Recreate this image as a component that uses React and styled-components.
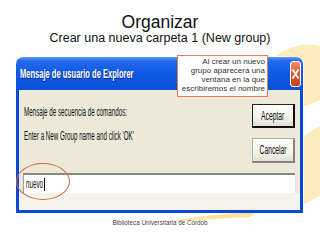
import styled, { createGlobalStyle } from 'styled-components';

const GlobalStyle = createGlobalStyle`
  html, body {
    margin: 0;
    padding: 0;
    background: #ffffff;
  }
  body {
    font-family: "Liberation Sans", Arial, sans-serif;
  }
`;

const Page = styled.div`
  position: relative;
  width: 320px;
  height: 240px;
  overflow: hidden;
  background: #ffffff;
`;

const Watermark = styled.svg`
  position: absolute;
  left: 0;
  top: 0;
  z-index: 0;
`;

const Content = styled.div`
  position: relative;
  z-index: 1;
  display: flex;
  flex-direction: column;
  padding-top: 13px;
`;

const Title = styled.h1`
  margin: 0;
  font-size: 17.5px;
  line-height: 18px;
  font-weight: normal;
  text-align: center;
  color: #111;
`;

const Subtitle = styled.h2`
  margin: 0;
  font-size: 12.5px;
  line-height: 14px;
  font-weight: normal;
  text-align: center;
  color: #111;
`;

const Dialog = styled.div`
  margin: 12px 0 0 16px;
  width: 287px;
  height: 156px;
  display: flex;
  flex-direction: column;
`;

const TitleBar = styled.div`
  height: 33px;
  flex: none;
  display: flex;
  align-items: center;
  justify-content: space-between;
  padding: 0 2px 0 4px;
  border-radius: 7px 7px 0 0;
  background: linear-gradient(180deg, #5a9cf8 0%, #2468ec 12%, #0d58e4 55%, #0a4fd8 100%);
  box-sizing: border-box;
`;

const Squeeze = styled.span`
  display: inline-block;
  white-space: nowrap;
  transform: scaleX(${p => p.$sx});
  transform-origin: ${p => p.$origin || 'left'} center;
`;

const TitleText = styled(Squeeze)`
  color: #ffffff;
  font-size: 13px;
  font-weight: bold;
  text-shadow: 1px 1px 0 #0a2f8a;
`;

const CloseButton = styled.div`
  width: 11px;
  height: 26px;
  box-sizing: border-box;
  border: 1px solid #ffffff;
  border-radius: 3px;
  background: linear-gradient(180deg, #f09070 0%, #e0582a 50%, #c9401a 100%);
  display: flex;
  align-items: center;
  justify-content: center;
  overflow: hidden;
`;

const Body = styled.div`
  flex: 1;
  display: flex;
  flex-direction: column;
  background: #ece9d8;
  border: 3px solid #0a48d6;
  border-top: none;
  box-sizing: border-box;
`;

const TopRow = styled.div`
  display: flex;
  justify-content: space-between;
  padding: 0 5px;
`;

const Messages = styled.div`
  display: flex;
  flex-direction: column;
  gap: 11px;
  padding-top: 16px;
`;

const Message = styled(Squeeze)`
  font-size: 12px;
  line-height: 13px;
  color: #111;
`;

const Buttons = styled.div`
  display: flex;
  flex-direction: column;
  gap: 10px;
  padding-top: 14px;
`;

const Button = styled.div`
  width: 43px;
  height: ${p => (p.$default ? 24 : 25)}px;
  box-sizing: border-box;
  display: flex;
  align-items: center;
  justify-content: center;
  font-size: 12px;
  color: #111;
  background: linear-gradient(180deg, #ffffff 0%, #f3f2ec 60%, #e3e0d4 100%);
  border: 1px solid ${p => (p.$default ? '#222' : '#b4b2a8')};
  border-right-width: 2px;
  border-bottom-width: 2px;
  border-right-color: ${p => (p.$default ? '#111' : '#86847a')};
  border-bottom-color: ${p => (p.$default ? '#111' : '#86847a')};
`;

const InputArea = styled.div`
  margin-top: 10px;
  padding: 0 5px 0 4px;
  display: flex;
  flex-direction: column;
`;

const Input = styled.div`
  height: 20px;
  box-sizing: border-box;
  background: #ffffff;
  border-top: 2px solid #8a8983;
  border-left: 1px solid #a09f98;
  display: flex;
  align-items: center;
  padding-left: 2px;
`;

const InputText = styled(Squeeze)`
  font-size: 12px;
  color: #111;
`;

const Caret = styled.span`
  width: 1px;
  height: 13px;
  background: #111;
  margin-left: -15px;
`;

const Strip = styled.div`
  flex: 1;
  background: #f5f3ea;
`;

const Footer = styled.div`
  margin-top: 6px;
  font-size: 6.3px;
  line-height: 8px;
  text-align: center;
  color: #444;
`;

const Callout = styled.div`
  position: absolute;
  left: 177px;
  top: 55px;
  width: 91px;
  height: 42px;
  box-sizing: border-box;
  z-index: 2;
  background: #ffffff;
  border: 1px solid #e27c5c;
  padding: 1px 2px 0 0;
  font-size: 8px;
  line-height: 9px;
  color: #333;
  text-align: right;
`;

const Ellipse = styled.div`
  position: absolute;
  left: 16px;
  top: 163px;
  width: 54px;
  height: 37px;
  box-sizing: border-box;
  z-index: 2;
  border: 1px solid #d2643e;
  border-radius: 50%;
`;

export default function App() {
  return (
    <Page>
      <GlobalStyle />
      <Watermark width="320" height="240" viewBox="0 0 320 240">
        <path d="M276 56 Q300 40 320 46 L320 100 Q312 104 304 106 L304 60 Q292 56 276 56 Z" fill="#fcecbd" />
        <path d="M304 136 Q312 130 320 126 L320 196 Q312 200 304 204 Z" fill="#fcecbd" />
        <path d="M165 222 Q210 214 252 212 Q256 214 250 217 Q210 219 165 222 Z" fill="#fbe2a0" />
      </Watermark>
      <Content>
        <Title>Organizar</Title>
        <Subtitle>Crear una nueva carpeta 1 (New group)</Subtitle>
        <Dialog>
          <TitleBar>
            <TitleText $sx={0.58}>Mensaje de usuario de Explorer</TitleText>
            <CloseButton>
              <svg width="9" height="12" viewBox="0 0 9 12">
                <path d="M1.5 1.5 L7.5 10.5 M7.5 1.5 L1.5 10.5" stroke="#fff" strokeWidth="1.8" />
              </svg>
            </CloseButton>
          </TitleBar>
          <Body>
            <TopRow>
              <Messages>
                <Message $sx={0.52}>Mensaje de secuencia de comandos:</Message>
                <Message $sx={0.52}>Enter a New Group name and click 'OK'</Message>
              </Messages>
              <Buttons>
                <Button $default>
                  <Squeeze $sx={0.56} $origin="center">Aceptar</Squeeze>
                </Button>
                <Button>
                  <Squeeze $sx={0.56} $origin="center">Cancelar</Squeeze>
                </Button>
              </Buttons>
            </TopRow>
            <InputArea>
              <Input>
                <InputText $sx={0.52}>nuevo</InputText>
                <Caret />
              </Input>
            </InputArea>
            <Strip />
          </Body>
        </Dialog>
        <Footer>Biblioteca Universitaria de Córdob</Footer>
      </Content>
      <Callout>
        Al crear un nuevo<br />
        grupo aparecerá una<br />
        ventana en la que<br />
        escribiremos el nombre
      </Callout>
      <Ellipse />
    </Page>
  );
}
